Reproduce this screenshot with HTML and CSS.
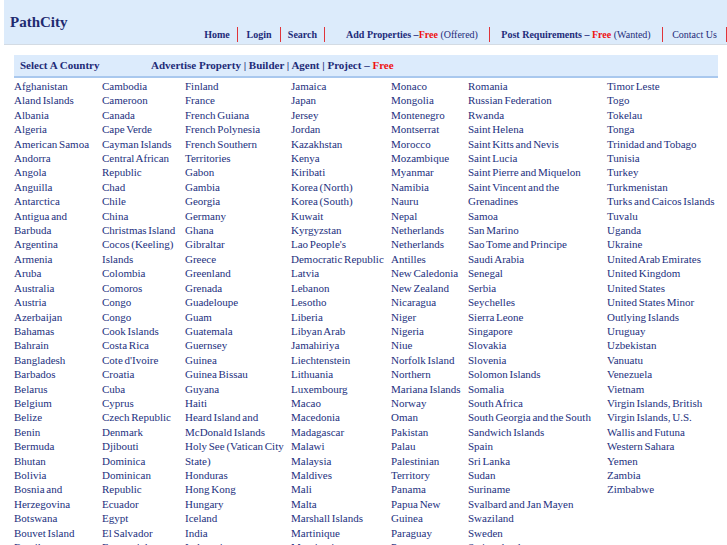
FILE: index.html
```html
<!DOCTYPE html>
<html lang="en">
<head>
<meta charset="utf-8">
<title>PathCity - Select A Country</title>
<link rel="stylesheet" href="styles.css">
</head>
<body>
<header class="top">
  <div class="logo">PathCity</div>
  <nav class="nav">
    <a class="nav-item w-home" href="#">Home</a>
    <a class="nav-item w-login" href="#">Login</a>
    <a class="nav-item w-search" href="#">Search</a>
    <a class="nav-item w-add" href="#">Add Properties –<span class="red">Free</span> <span class="plain">(Offered)</span></a>
    <a class="nav-item w-post" href="#">Post Requirements – <span class="red">Free</span> <span class="plain">(Wanted)</span></a>
    <a class="nav-item w-contact" href="#">Contact Us</a>
  </nav>
</header>

<div class="bar">
  <div class="bar-title">Select A Country</div>
  <div class="bar-links">Advertise Property | Builder | Agent | Project – <span class="red">Free</span></div>
</div>

<div class="countries">
  <ul class="col">
    <li>Afghanistan</li><li>Aland Islands</li><li>Albania</li><li>Algeria</li><li>American Samoa</li><li>Andorra</li><li>Angola</li><li>Anguilla</li><li>Antarctica</li><li>Antigua and Barbuda</li><li>Argentina</li><li>Armenia</li><li>Aruba</li><li>Australia</li><li>Austria</li><li>Azerbaijan</li><li>Bahamas</li><li>Bahrain</li><li>Bangladesh</li><li>Barbados</li><li>Belarus</li><li>Belgium</li><li>Belize</li><li>Benin</li><li>Bermuda</li><li>Bhutan</li><li>Bolivia</li><li>Bosnia and Herzegovina</li><li>Botswana</li><li>Bouvet Island</li><li>Brazil</li><li>Brunei</li><li>Bulgaria</li>
  </ul>
  <ul class="col">
    <li>Cambodia</li><li>Cameroon</li><li>Canada</li><li>Cape Verde</li><li>Cayman Islands</li><li>Central African Republic</li><li>Chad</li><li>Chile</li><li>China</li><li>Christmas Island</li><li>Cocos (Keeling) Islands</li><li>Colombia</li><li>Comoros</li><li>Congo</li><li>Congo</li><li>Cook Islands</li><li>Costa Rica</li><li>Cote d'Ivoire</li><li>Croatia</li><li>Cuba</li><li>Cyprus</li><li>Czech Republic</li><li>Denmark</li><li>Djibouti</li><li>Dominica</li><li>Dominican Republic</li><li>Ecuador</li><li>Egypt</li><li>El Salvador</li><li>Equatorial Guinea</li><li>Eritrea</li><li>Estonia</li>
  </ul>
  <ul class="col">
    <li>Finland</li><li>France</li><li>French Guiana</li><li>French Polynesia</li><li>French Southern Territories</li><li>Gabon</li><li>Gambia</li><li>Georgia</li><li>Germany</li><li>Ghana</li><li>Gibraltar</li><li>Greece</li><li>Greenland</li><li>Grenada</li><li>Guadeloupe</li><li>Guam</li><li>Guatemala</li><li>Guernsey</li><li>Guinea</li><li>Guinea Bissau</li><li>Guyana</li><li>Haiti</li><li>Heard Island and McDonald Islands</li><li>Holy See (Vatican City State)</li><li>Honduras</li><li>Hong Kong</li><li>Hungary</li><li>Iceland</li><li>India</li><li>Indonesia</li><li>Iran</li><li>Iraq</li>
  </ul>
  <ul class="col">
    <li>Jamaica</li><li>Japan</li><li>Jersey</li><li>Jordan</li><li>Kazakhstan</li><li>Kenya</li><li>Kiribati</li><li>Korea (North)</li><li>Korea (South)</li><li>Kuwait</li><li>Kyrgyzstan</li><li>Lao People's Democratic Republic</li><li>Latvia</li><li>Lebanon</li><li>Lesotho</li><li>Liberia</li><li>Libyan Arab Jamahiriya</li><li>Liechtenstein</li><li>Lithuania</li><li>Luxembourg</li><li>Macao</li><li>Macedonia</li><li>Madagascar</li><li>Malawi</li><li>Malaysia</li><li>Maldives</li><li>Mali</li><li>Malta</li><li>Marshall Islands</li><li>Martinique</li><li>Mauritania</li><li>Mauritius</li>
  </ul>
  <ul class="col">
    <li>Monaco</li><li>Mongolia</li><li>Montenegro</li><li>Montserrat</li><li>Morocco</li><li>Mozambique</li><li>Myanmar</li><li>Namibia</li><li>Nauru</li><li>Nepal</li><li>Netherlands</li><li>Netherlands Antilles</li><li>New Caledonia</li><li>New Zealand</li><li>Nicaragua</li><li>Niger</li><li>Nigeria</li><li>Niue</li><li>Norfolk Island</li><li>Northern Mariana Islands</li><li>Norway</li><li>Oman</li><li>Pakistan</li><li>Palau</li><li>Palestinian Territory</li><li>Panama</li><li>Papua New Guinea</li><li>Paraguay</li><li>Peru</li><li>Philippines</li>
  </ul>
  <ul class="col">
    <li>Romania</li><li>Russian Federation</li><li>Rwanda</li><li>Saint Helena</li><li>Saint Kitts and Nevis</li><li>Saint Lucia</li><li>Saint Pierre and Miquelon</li><li>Saint Vincent and the Grenadines</li><li>Samoa</li><li>San Marino</li><li>Sao Tome and Principe</li><li>Saudi Arabia</li><li>Senegal</li><li>Serbia</li><li>Seychelles</li><li>Sierra Leone</li><li>Singapore</li><li>Slovakia</li><li>Slovenia</li><li>Solomon Islands</li><li>Somalia</li><li>South Africa</li><li>South Georgia and the South Sandwich Islands</li><li>Spain</li><li>Sri Lanka</li><li>Sudan</li><li>Suriname</li><li>Svalbard and Jan Mayen</li><li>Swaziland</li><li>Sweden</li><li>Switzerland</li><li>Syria</li>
  </ul>
  <ul class="col col-last">
    <li>Timor Leste</li><li>Togo</li><li>Tokelau</li><li>Tonga</li><li>Trinidad and Tobago</li><li>Tunisia</li><li>Turkey</li><li>Turkmenistan</li><li>Turks and Caicos Islands</li><li>Tuvalu</li><li>Uganda</li><li>Ukraine</li><li>United Arab Emirates</li><li>United Kingdom</li><li>United States</li><li>United States Minor Outlying Islands</li><li>Uruguay</li><li>Uzbekistan</li><li>Vanuatu</li><li>Venezuela</li><li>Vietnam</li><li>Virgin Islands, British</li><li>Virgin Islands, U.S.</li><li>Wallis and Futuna</li><li>Western Sahara</li><li>Yemen</li><li>Zambia</li><li>Zimbabwe</li>
  </ul>
</div>
</body>
</html>
```

FILE: styles.css
```css
html, body {
  margin: 0;
  padding: 0;
  background: #ffffff;
  overflow: hidden;
}

body {
  font-family: "Liberation Serif", "Times New Roman", serif;
  color: #1f2d7c;
}

.red {
  color: #ee1111;
}

/* ---------- top header ---------- */
.top {
  margin-left: 4px;
  height: 42px;
  padding-bottom: 2px;
  background: #dcebfb;
  border-bottom: 1px solid #d3dbe4;
  display: flex;
  justify-content: space-between;
  align-items: flex-end;
}

.logo {
  align-self: flex-start;
  margin-top: 13px;
  padding-left: 6px;
  font-size: 15px;
  line-height: 18px;
  font-weight: bold;
  color: #1e2a70;
}

.nav {
  display: flex;
  height: 15px;
}

.nav-item {
  box-sizing: border-box;
  height: 15px;
  line-height: 15px;
  font-size: 10px;
  font-weight: bold;
  color: #1e2b7a;
  text-decoration: none;
  text-align: center;
  white-space: nowrap;
  border-right: 1px solid #e0343a;
}

.nav-item .plain {
  font-weight: normal;
}

.w-home { width: 41px; }
.w-login { width: 43px; }
.w-search { width: 44px; }
.w-add { width: 165px; padding-left: 10px; }
.w-post { width: 173px; }
.nav-item.w-contact { width: 64px; font-weight: normal; }

/* ---------- country bar ---------- */
.bar {
  margin: 10px 9px 0 14px;
  height: 21px;
  line-height: 21px;
  background: #dcebfc;
  border-bottom: 2px solid #a9c8ee;
  display: grid;
  grid-template-columns: 131px 1fr;
  padding-left: 6px;
  font-size: 11px;
  font-weight: bold;
  color: #1e2b78;
}

/* ---------- country list ---------- */
.countries {
  margin: 1px 9px 0 14px;
  display: grid;
  grid-template-columns: 88px 83px 106px 100px 77px 139px 1fr;
  align-items: start;
}

.col {
  list-style: none;
  margin: 0;
  padding: 0 4px 0 0;
}

.col-last {
  padding-right: 0;
}

.col li {
  font-size: 11px;
  line-height: 14.4px;
  word-spacing: -1px;
  color: #23307e;
}
```
